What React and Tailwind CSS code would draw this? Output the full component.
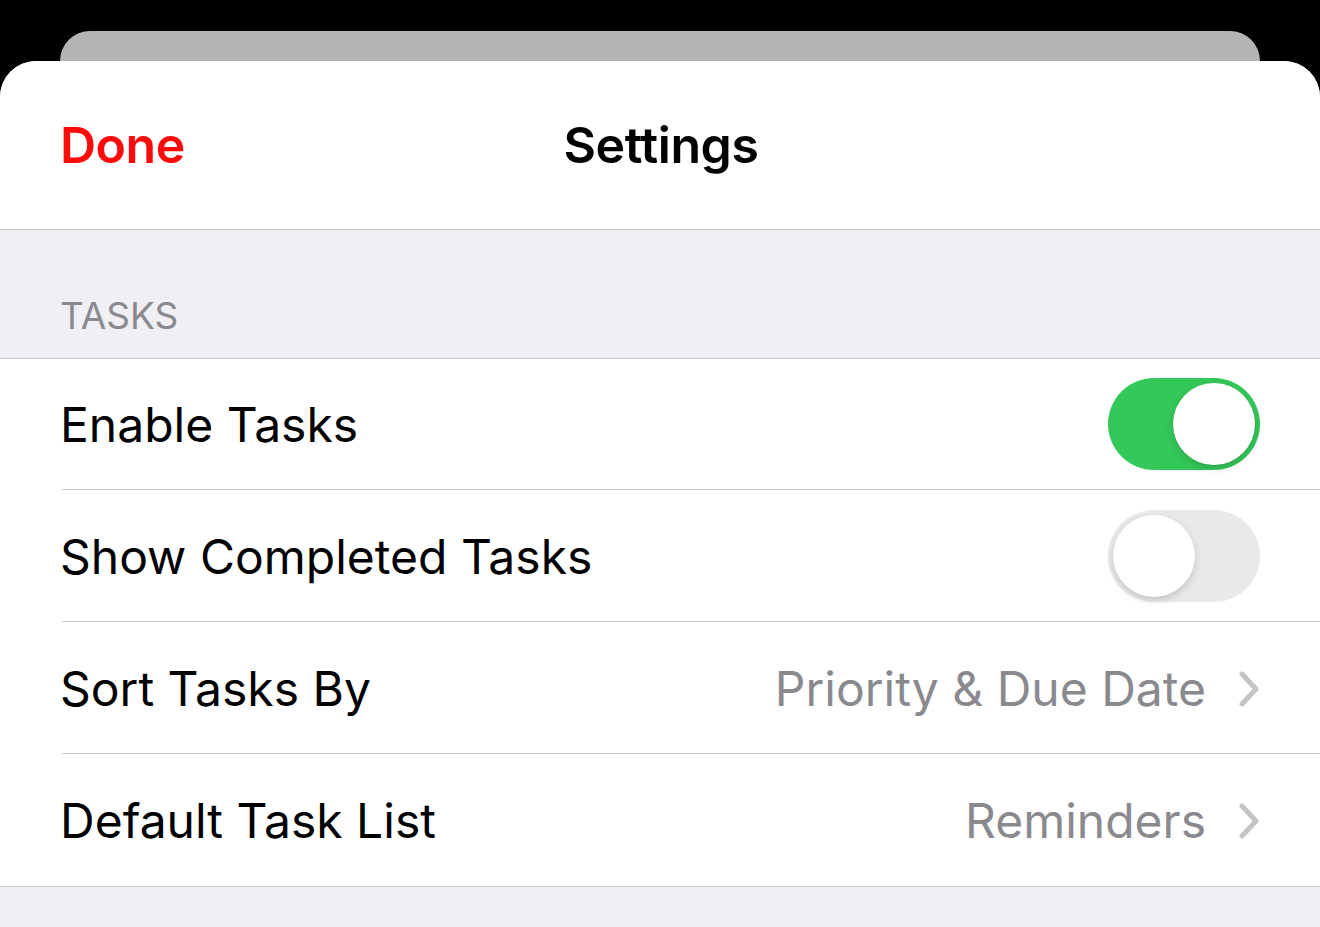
import { useState } from 'react'

const font = { fontFamily: 'Inter, "Noto Sans", sans-serif' }

function Toggle({ on, onChange }) {
  return (
    <button
      onClick={onChange}
      className={`relative w-[152px] h-[92px] rounded-full -mt-[2px] transition-colors ${on ? 'bg-[#34c759]' : 'bg-[#e9e9ea]'}`}
    >
      <span
        className={`absolute top-[5px] w-[82px] h-[82px] rounded-full bg-white shadow-[0_3px_8px_rgba(0,0,0,0.15),0_1px_1px_rgba(0,0,0,0.06)] transition-all ${on ? 'left-[65px]' : 'left-[5px]'}`}
      />
    </button>
  )
}

function Chevron() {
  return (
    <svg width="22" height="36" viewBox="0 0 22 36" className="ml-[32px]">
      <path d="M4 3 L18 18 L4 33" fill="none" stroke="#c4c4c7" strokeWidth="5" strokeLinecap="round" strokeLinejoin="round" />
    </svg>
  )
}

function Row({ label, children, last, first }) {
  return (
    <div className="pl-[62px]">
      <div className={`${first ? 'h-[131px]' : 'h-[132px]'} flex items-center justify-between pr-[60px] ${last ? '' : 'border-b border-[#c8c7cc]'}`}>
        <span className="text-[48px] text-black -ml-[2px] mt-[2px]">{label}</span>
        <div className="flex items-center mt-[2px]">{children}</div>
      </div>
    </div>
  )
}

export default function App() {
  const [enabled, setEnabled] = useState(true)
  const [showCompleted, setShowCompleted] = useState(false)

  return (
    <div className="w-[1320px] h-[927px] bg-black overflow-hidden flex flex-col" style={font}>
      {/* card behind */}
      <div className="mt-[31px] mx-[60px] h-[30px] bg-[#b4b4b4] rounded-t-[30px] shrink-0" />

      {/* sheet */}
      <div className="flex-1 bg-[#f0eff4] rounded-t-[36px] overflow-hidden flex flex-col">
        <div className="bg-white h-[169px] shrink-0 border-b border-[#c8c7cc] relative flex items-center px-[62px]">
          <button className="text-[50px] font-semibold text-[#ff0a0a] tracking-[-0.5px] -ml-[2px]">Done</button>
          <div className="absolute inset-0 flex items-center justify-center pointer-events-none">
            <span className="text-[50px] font-semibold text-black tracking-[-0.4px] ml-[2px]">Settings</span>
          </div>
        </div>

        <div className="h-[128px] shrink-0 flex items-end px-[62px] pb-[15px]">
          <span className="text-[37px] text-[#8a8a8e] -ml-[2px]">TASKS</span>
        </div>

        <div className="bg-white border-y border-[#c8c7cc] shrink-0">
          <Row label="Enable Tasks" first>
            <Toggle on={enabled} onChange={() => setEnabled(!enabled)} />
          </Row>
          <Row label="Show Completed Tasks">
            <Toggle on={showCompleted} onChange={() => setShowCompleted(!showCompleted)} />
          </Row>
          <Row label="Sort Tasks By">
            <span className="text-[48px] text-[#8a8a8e]">Priority &amp; Due Date</span>
            <Chevron />
          </Row>
          <Row label="Default Task List" last>
            <span className="text-[48px] text-[#8a8a8e]">Reminders</span>
            <Chevron />
          </Row>
        </div>
      </div>
    </div>
  )
}
